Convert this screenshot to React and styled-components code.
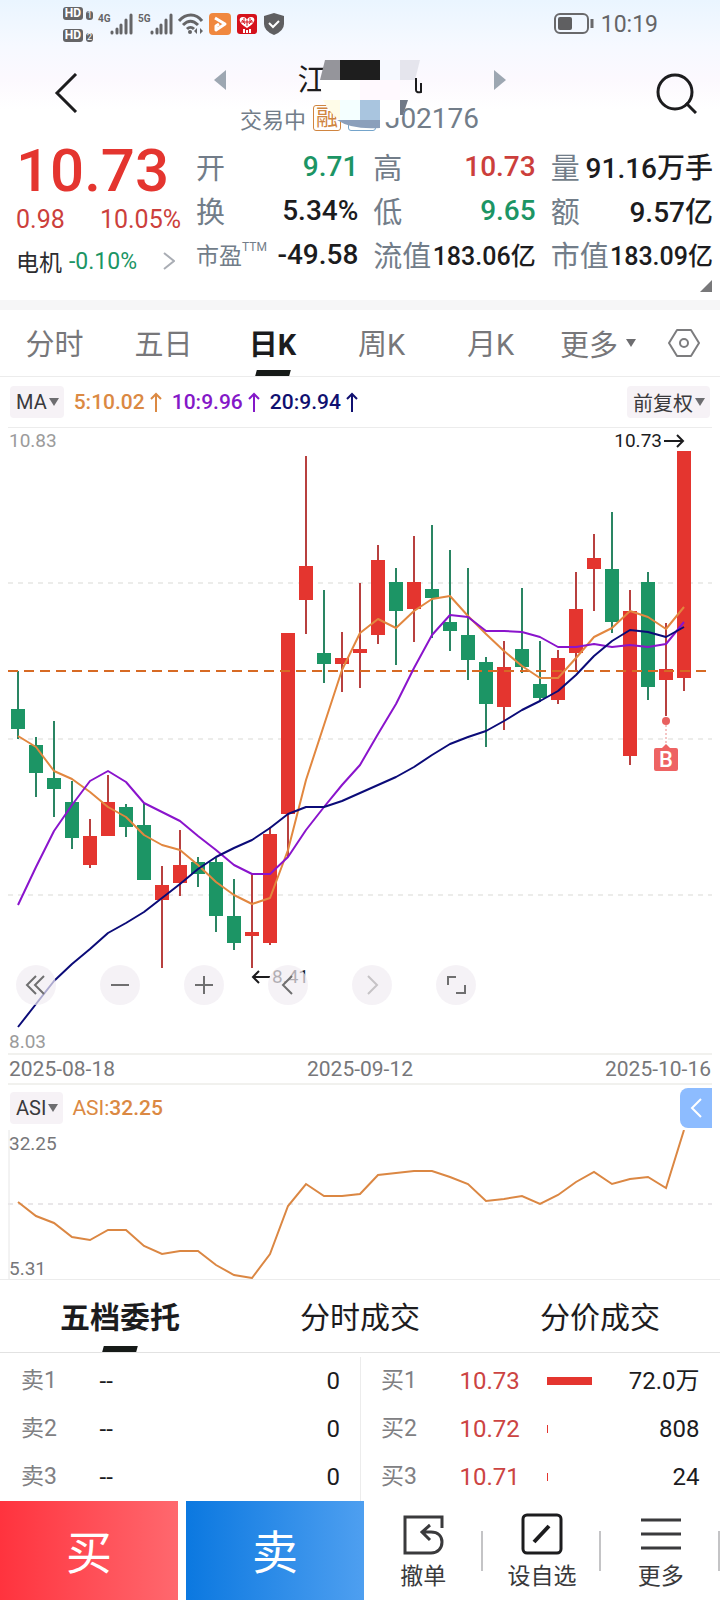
import React, { useState } from 'react';
import styled, { createGlobalStyle } from 'styled-components';

const RED = '#e4352f';
const GREEN = '#1c9565';
const INK = '#1c1c1e';
const SLATE = '#727d89';

// [high, body top, body bottom, low, direction]
const candles = [
  [671, 709, 729, 739, 'down'],
  [737, 745, 773, 797, 'down'],
  [721, 778, 789, 817, 'down'],
  [781, 802, 838, 849, 'down'],
  [819, 836, 865, 868, 'up'],
  [775, 802, 836, 836, 'up'],
  [804, 807, 827, 837, 'down'],
  [803, 825, 880, 880, 'down'],
  [866, 885, 900, 968, 'up'],
  [830, 865, 883, 896, 'up'],
  [857, 862, 874, 887, 'down'],
  [858, 862, 916, 932, 'down'],
  [879, 916, 943, 950, 'down'],
  [874, 932, 936, 968, 'up'],
  [827, 834, 943, 945, 'up'],
  [633, 633, 814, 857, 'up'],
  [456, 566, 600, 634, 'up'],
  [590, 653, 664, 683, 'down'],
  [632, 658, 664, 692, 'up'],
  [583, 649, 653, 688, 'up'],
  [545, 560, 635, 644, 'up'],
  [568, 582, 611, 665, 'down'],
  [536, 582, 609, 642, 'up'],
  [525, 589, 598, 638, 'down'],
  [550, 622, 631, 651, 'down'],
  [568, 635, 660, 680, 'down'],
  [657, 662, 704, 747, 'down'],
  [641, 667, 707, 730, 'up'],
  [588, 649, 667, 673, 'down'],
  [641, 684, 698, 702, 'down'],
  [650, 658, 700, 704, 'up'],
  [572, 609, 653, 672, 'up'],
  [534, 558, 569, 611, 'up'],
  [512, 569, 622, 633, 'down'],
  [590, 611, 756, 765, 'up'],
  [572, 582, 687, 700, 'down'],
  [623, 669, 680, 716, 'up'],
  [451, 451, 678, 691, 'up'],
];

const ma5 = [
  736, 747, 771, 779, 792, 807, 817, 835, 845, 850, 865, 882, 895, 904, 898, 850, 780, 725, 670,
  633, 619, 628, 611, 599, 596, 616, 634, 651, 666, 678, 678, 658, 637, 628, 611, 617, 629, 607,
];
const ma10 = [
  905, 867, 831, 805, 781, 771, 782, 803, 812, 821, 836, 850, 865, 874, 874, 857, 830, 807, 785,
  765, 734, 704, 668, 635, 615, 617, 631, 631, 632, 637, 647, 647, 644, 647, 645, 647, 644, 622,
];
const ma20 = [
  1027, 1004, 981, 964, 949, 933, 923, 912, 898, 884, 869, 857, 848, 840, 828, 814, 807, 807, 801,
  793, 785, 777, 767, 755, 744, 737, 731, 721, 710, 701, 691, 675, 656, 641, 630, 632, 637, 627,
];
const asi = [
  1202, 1216, 1223, 1237, 1240, 1230, 1230, 1246, 1254, 1251, 1251, 1265, 1275, 1278, 1254, 1206,
  1184, 1196, 1196, 1194, 1175, 1173, 1171, 1171, 1177, 1184, 1201, 1199, 1196, 1204, 1195, 1182,
  1172, 1184, 1179, 1177, 1188, 1130,
];

const xAt = (i) => 18 + i * 18;
const toPoints = (values) => values.map((y, i) => `${xAt(i)},${y}`).join(' ');

const stats = [
  [
    { label: '开', value: '9.71', color: GREEN },
    { label: '换', value: '5.34%' },
    { label: '市盈', sup: 'TTM', value: '-49.58', smallLabel: true },
  ],
  [
    { label: '高', value: '10.73', color: '#cc3f3c' },
    { label: '低', value: '9.65', color: GREEN },
    { label: '流值', value: '183.06亿', small: true },
  ],
  [
    { label: '量', value: '91.16万手' },
    { label: '额', value: '9.57亿' },
    { label: '市值', value: '183.09亿', small: true },
  ],
];

const periods = ['分时', '五日', '日K', '周K', '月K'];
const orderTabs = ['五档委托', '分时成交', '分价成交'];

const sells = [
  { name: '卖1', price: '--', qty: '0' },
  { name: '卖2', price: '--', qty: '0' },
  { name: '卖3', price: '--', qty: '0' },
];
const buys = [
  { name: '买1', price: '10.73', bar: 45, qty: '72.0万' },
  { name: '买2', price: '10.72', bar: 1, qty: '808' },
  { name: '买3', price: '10.71', bar: 1, qty: '24' },
];

function Signal({ label }) {
  return (
    <SignalBox>
      <small>{label}</small>
      <svg width="23" height="22" viewBox="0 0 23 22" stroke="#656567" strokeWidth="3" strokeLinecap="round">
        <path d="M2 20v-1M7 20v-4M11 20v-8M16 20V7M21 20V2" />
      </svg>
    </SignalBox>
  );
}

function StatusBar() {
  return (
    <Status>
      <HdStack>
        {[1, 2].map((n) => (
          <div key={n}>
            <b>HD</b>
            <i>{n}</i>
          </div>
        ))}
      </HdStack>
      <Signal label="4G" />
      <Signal label="5G" />
      <svg width="26" height="22" viewBox="0 0 26 22" fill="none" stroke="#656567" strokeWidth="3">
        <path d="M1 8C8 0 18 0 24 8M5 12C10 7 15 7 20 12M9 16c2-2 5-2 7 0" />
        <circle cx="12" cy="19" r="2" fill="#656567" stroke="none" />
        <path d="M16 18l3-3v6zM25 18l-3-3v6z" fill="#656567" stroke="none" />
      </svg>
      <svg width="22" height="22" viewBox="0 0 22 22">
        <rect width="22" height="22" rx="4" fill="#f0883f" />
        <path d="M6 5l10 6-9 6v-4l3-2" fill="none" stroke="#fff" strokeWidth="3" strokeLinejoin="round" />
      </svg>
      <svg width="22" height="20" viewBox="-1 0 22 20">
        <rect width="20" height="20" rx="3" fill="#d5121c" />
        <path d="M10 14C1 9 1 3 6 3q3 0 4 3 1-3 4-3c5 0 5 6-4 11z" fill="#fff" />
        <path d="M5 6l3 4M10 6v6M15 6l-3 4M4 8h12M7 4v4M13 4v4" stroke="#d5121c" strokeWidth="1" />
        <path d="M7 15v4M10 16v3M13 15v4" stroke="#fff" strokeWidth="2" />
      </svg>
      <svg width="22" height="22" viewBox="-1 0 22 22">
        <path d="M10 0l10 3v8q0 7-10 11Q0 18 0 11V3z" fill="#5f5f61" />
        <path d="M5 10l4 4 6-6" fill="none" stroke="#fff" strokeWidth="2" />
      </svg>
      <Clock>
        <svg width="42" height="22" viewBox="0 0 42 22" fill="none" stroke="#69696b" strokeWidth="2">
          <rect x="2" y="1" width="33" height="19" rx="5" />
          <rect x="5" y="4" width="14" height="13" rx="2" fill="#5f5f61" stroke="none" />
          <path d="M39 6v9" strokeWidth="3" />
        </svg>
        10:19
      </Clock>
    </Status>
  );
}

function Title() {
  return (
    <Nav>
      <IconButton aria-label="返回">
        <svg width="24" height="40" viewBox="0 0 24 40" fill="none" stroke={INK} strokeWidth="3">
          <path d="M22 1L3 20l19 19" />
        </svg>
      </IconButton>
      <Heading>
        <NameRow>
          <IconButton aria-label="上一只">
            <svg width="12" height="20" viewBox="0 0 12 20">
              <path d="M12 0v20L0 10z" fill="#9da7b2" />
            </svg>
          </IconButton>
          <h1>江</h1>
          <IconButton aria-label="下一只">
            <svg width="12" height="20" viewBox="0 0 12 20">
              <path d="M0 0v20l12-10z" fill="#9da7b2" />
            </svg>
          </IconButton>
        </NameRow>
        <CodeRow>
          <span>交易中</span>
          <Tag $color="#d08540">融</Tag>
          <Tag $color="#74a4cb" />
          <Code>J02176</Code>
        </CodeRow>
        <Mosaic width="108" height="72" viewBox="316 60 108 72" aria-hidden="true">
          <path d="M320 80h80v20h8l-6 17-12 2-10 1h-40l-18-20z" fill="#fff" />
          <path d="M325 60h15v20h-20z" fill="#95959b" />
          <path d="M340 60h40v20h-40z" fill="#1e1e1e" />
          <path d="M380 60h20v20h-20z" fill="#f6f9ff" />
          <path d="M400 60h20l-5 20h-15z" fill="#e5e5ed" />
          <path d="M360 80h40v20h-40z" fill="#fff9fe" />
          <path d="M323 100h17v20q-10-6-17-20z" fill="#fffce8" />
          <path d="M340 100h20v20h-20z" fill="#f4ffff" />
          <path d="M360 100h20v20h-20z" fill="#a9c5df" />
          <path d="M337 120h43v8q-28 2-43-8z" fill="#8b9fbb" />
          <path d="M400 100h8l-5 15h-3z" fill="#717986" />
          <path d="M416 78v12q0 3 5 2v-9" fill="none" stroke={INK} strokeWidth="2" />
        </Mosaic>
      </Heading>
      <IconButton aria-label="搜索">
        <svg width="42" height="42" viewBox="0 0 42 42" fill="none" stroke={INK} strokeWidth="3">
          <circle cx="20" cy="20" r="17" />
          <path d="M31 31l10 10" />
        </svg>
      </IconButton>
    </Nav>
  );
}

function Quote() {
  return (
    <QuoteGrid>
      <PriceColumn>
        <Price>10.73</Price>
        <Change>
          <span>0.98</span>
          <span>10.05%</span>
        </Change>
        <Sector href="#sector">
          电机 <em>-0.10%</em>
          <svg width="12" height="18" viewBox="0 0 12 18" fill="none" stroke="#a9adb4" strokeWidth="2">
            <path d="M1 1l10 8-10 8" />
          </svg>
        </Sector>
      </PriceColumn>
      {stats.map((column, i) => (
        <StatColumn key={i}>
          {column.map((s) => (
            <Stat key={s.label}>
              <StatLabel $small={s.smallLabel}>
                {s.label}
                {s.sup && <sup>{s.sup}</sup>}
              </StatLabel>
              <StatValue $color={s.color} $small={s.small}>
                {s.value}
              </StatValue>
            </Stat>
          ))}
        </StatColumn>
      ))}
    </QuoteGrid>
  );
}

function KLine() {
  return (
    <ChartBox>
      <svg viewBox="8 428 704 625" fontFamily="Roboto, sans-serif" fontSize="19">
        <g stroke="#ececea" strokeWidth="2" strokeDasharray="5 5">
          <path d="M8 583h704M8 739h704M8 895h704" />
        </g>
        {candles.map(([high, top, bottom, low, dir], i) => (
          <g key={i} fill={dir === 'up' ? RED : GREEN}>
            <rect x={xAt(i) - 1} y={high} width="2" height={low - high} fill={dir === 'up' ? '#b8403f' : '#2a8563'} />
            <rect x={xAt(i) - 7} y={top} width="14" height={bottom - top} />
          </g>
        ))}
        <path d="M8 671h698" stroke="#d76a24" strokeWidth="2" strokeDasharray="10 6" />
        <g fill="none" strokeWidth="2" strokeLinejoin="round">
          <polyline points={toPoints(ma5)} stroke="#e2873f" />
          <polyline points={toPoints(ma10)} stroke="#8a14cc" />
          <polyline points={toPoints(ma20)} stroke="#0b0b78" />
        </g>
        <path d="M666 725v22" stroke="#e98a88" strokeDasharray="2 2" />
        <circle cx="666" cy="721" r="4" fill="#e8605f" />
        <path d="M656 748h6l4-4 4 4h6q2 0 2 2v19q0 2-2 2h-20q-2 0-2-2v-19q0-2 2-2z" fill="#ee6363" />
        <text x="666" y="767" fill="#fff" fontSize="22" fontWeight="500" textAnchor="middle">
          B
        </text>
        <g fill="#9b9b9b">
          <text x="9" y="447">10.83</text>
          <text x="9" y="1048">8.03</text>
        </g>
        <g fill={INK}>
          <text x="662" y="447" textAnchor="end">
            10.73
          </text>
          <text x="272" y="983">8.41</text>
        </g>
        <g fill="none" stroke={INK} strokeWidth="2">
          <path d="M664 441h18M677 435l6 6-6 6" />
          <path d="M270 977h-17M259 971l-6 6 6 6" />
        </g>
      </svg>
      <Controls>
        <RoundButton aria-label="最早">
          <path d="M20 11l-9 9 9 9M28 11l-9 9 9 9" />
        </RoundButton>
        <RoundButton aria-label="缩小">
          <path d="M11 20h18" />
        </RoundButton>
        <RoundButton aria-label="放大">
          <path d="M11 20h18M20 11v18" />
        </RoundButton>
        <RoundButton aria-label="向左">
          <path d="M24 11l-9 9 9 9" />
        </RoundButton>
        <RoundButton aria-label="向右" faded>
          <path d="M16 11l9 9-9 9" />
        </RoundButton>
        <RoundButton aria-label="全屏">
          <path d="M12 20v-8h8M29 20v8h-9" />
        </RoundButton>
      </Controls>
    </ChartBox>
  );
}

function RoundButton({ children, faded, ...rest }) {
  return (
    <Round {...rest}>
      <svg width="40" height="40" viewBox="0 0 40 40" fill="none" stroke={faded ? '#c6c3c6' : '#6f6f70'} strokeWidth="2">
        {children}
      </svg>
    </Round>
  );
}

function OrderTable({ rows, side }) {
  return (
    <Orders $side={side}>
      <tbody>
        {rows.map((r) => (
          <tr key={r.name}>
            <th scope="row">{r.name}</th>
            <PriceCell $side={side}>{r.price}</PriceCell>
            {side === 'buy' && (
              <td>
                <Volume style={{ width: r.bar }} />
              </td>
            )}
            <QtyCell>{r.qty}</QtyCell>
          </tr>
        ))}
      </tbody>
    </Orders>
  );
}

export default function App() {
  const [period, setPeriod] = useState('日K');
  const [orderTab, setOrderTab] = useState('五档委托');

  return (
    <Page>
      <GlobalStyle />
      <Header>
        <StatusBar />
        <Title />
        <Quote />
        <Expand aria-label="展开">
          <svg width="12" height="12" viewBox="0 0 12 12">
            <path d="M12 0v12H0z" fill="#78787a" />
          </svg>
        </Expand>
      </Header>

      <PeriodTabs>
        {periods.map((p) => (
          <PeriodTab key={p} $active={p === period} onClick={() => setPeriod(p)}>
            {p}
          </PeriodTab>
        ))}
        <MoreTab>
          更多
          <Caret />
        </MoreTab>
        <IconButton aria-label="设置">
          <svg width="32" height="30" viewBox="0 0 32 30" fill="none" stroke="#7c7c7e" strokeWidth="2">
            <path d="M9 2h14l8 13-8 13H9L1 15z" strokeLinejoin="round" />
            <circle cx="16" cy="15" r="4" />
          </svg>
        </IconButton>
      </PeriodTabs>

      <Legend>
        <Chip>
          MA
          <Caret />
        </Chip>
        {[
          ['5:10.02', '#db8943'],
          ['10:9.96', '#8418c8'],
          ['20:9.94', '#101070'],
        ].map(([text, color]) => (
          <LegendItem key={text} $color={color}>
            {text}
            <svg width="12" height="20" viewBox="0 0 12 20" fill="none" stroke="currentColor" strokeWidth="2">
              <path d="M6 20V2M1 7l5-5 5 5" />
            </svg>
          </LegendItem>
        ))}
        <Chip $right>
          前复权
          <Caret />
        </Chip>
      </Legend>

      <KLine />
      <Dates>
        <span>2025-08-18</span>
        <span>2025-09-12</span>
        <span>2025-10-16</span>
      </Dates>

      <AsiBar>
        <Chip>
          ASI
          <Caret />
        </Chip>
        <AsiValue>
          ASI:<b>32.25</b>
        </AsiValue>
        <Drawer aria-label="更多指标">
          <svg width="12" height="20" viewBox="0 0 12 20" fill="none" stroke="#fff" strokeWidth="2">
            <path d="M11 1l-9 9 9 9" />
          </svg>
        </Drawer>
      </AsiBar>
      <ChartBox>
        <svg viewBox="8 1130 704 149" fontFamily="Roboto, sans-serif" fontSize="19" fill="#77777a">
          <path d="M9 1130v149" stroke="#e6e6e6" strokeWidth="1" />
          <path d="M8 1204h704" stroke="#e9e7e9" strokeWidth="2" strokeDasharray="5 5" />
          <polyline points={toPoints(asi)} fill="none" stroke="#db8743" strokeWidth="2" />
          <text x="9" y="1150">
            32.25
          </text>
          <text x="9" y="1275">
            5.31
          </text>
        </svg>
      </ChartBox>

      <OrderTabs>
        {orderTabs.map((t) => (
          <OrderTab key={t} $active={t === orderTab} onClick={() => setOrderTab(t)}>
            {t}
          </OrderTab>
        ))}
      </OrderTabs>
      <OrderBook>
        <OrderTable rows={sells} side="sell" />
        <OrderTable rows={buys} side="buy" />
      </OrderBook>

      <Footer>
        <Trade $from="#ff333e" $to="#ff686e">
          买
        </Trade>
        <Trade $from="#0b78e0" $to="#4e9ff0">
          卖
        </Trade>
        <Actions>
          <Action>
            <svg width="42" height="42" viewBox="0 0 42 42" fill="none" stroke="#3a3a3c" strokeWidth="3">
              <path d="M40 15V4H3v36h26c7 0 11-5 11-11s-4-10-11-10h-8M28 12l-8 7 8 8" />
            </svg>
            撤单
          </Action>
          <Action>
            <svg width="42" height="42" viewBox="0 0 42 42" fill="none" stroke={INK} strokeWidth="3">
              <rect x="2" y="2" width="38" height="38" rx="4" />
              <path d="M13 29l15-16" strokeWidth="4" />
            </svg>
            设自选
          </Action>
          <Action>
            <svg width="42" height="42" viewBox="0 0 42 42" stroke="#3a3a3c" strokeWidth="3">
              <path d="M1 7h40M1 21h40M1 35h40" />
            </svg>
            更多
          </Action>
        </Actions>
      </Footer>
    </Page>
  );
}

const GlobalStyle = createGlobalStyle`
  * {
    box-sizing: border-box;
  }

  body {
    margin: 0;
    background: #fff;
    color: ${INK};
    font-family: Roboto, 'Noto Sans CJK SC', sans-serif;
  }

  button {
    padding: 0;
    border: 0;
    background: none;
    color: inherit;
    font: inherit;
    cursor: pointer;
  }

  svg {
    display: block;
    flex: none;
  }
`;

const Page = styled.main`
  display: flex;
  flex-direction: column;
`;

const Header = styled.header`
  border-bottom: 10px solid #f6f6f7;
  background: linear-gradient(#eaf5ff 0, #f6f9ff 45px, #fcf9fe 80px, #fff 110px);
`;

const Status = styled.div`
  display: flex;
  align-items: center;
  gap: 5px;
  height: 50px;
  padding: 0 62px 2px 63px;
`;

const HdStack = styled.div`
  display: flex;
  flex-direction: column;
  gap: 9px;

  div {
    display: flex;
    align-items: flex-end;
    gap: 3px;
  }

  b,
  i {
    border-radius: 3px;
    background: #656567;
    color: #fff;
    font-size: 12px;
    font-style: normal;
    line-height: 13px;
    text-align: center;
  }

  b {
    width: 20px;
  }

  i {
    width: 7px;
    font-size: 9px;
    line-height: 9px;
  }
`;

const SignalBox = styled.div`
  display: flex;
  align-items: flex-start;

  small {
    width: 12px;
    font-size: 10px;
    font-weight: 700;
    line-height: 12px;
    color: #656567;
  }
`;

const Clock = styled.div`
  display: flex;
  align-items: center;
  gap: 6px;
  margin-left: auto;
  color: #656567;
  font-size: 23px;
`;

const IconButton = styled.button`
  display: flex;
  align-items: center;
  justify-content: center;
`;

const Nav = styled.div`
  display: flex;
  align-items: flex-start;
  justify-content: space-between;
  height: 86px;
  padding: 0 23px 0 54px;

  > ${IconButton} {
    height: 86px;
  }
`;

const Heading = styled.div`
  position: relative;
  display: flex;
  flex-direction: column;
  align-items: center;
  width: 292px;
  padding-top: 10px;
  margin-right: 14px;
`;

const NameRow = styled.div`
  display: flex;
  align-items: center;
  justify-content: space-between;
  width: 100%;
  height: 40px;

  h1 {
    width: 124px;
    margin: 0;
    font-size: 30px;
    font-weight: 400;
    line-height: 40px;
  }
`;

const CodeRow = styled.div`
  display: flex;
  align-items: center;
  gap: 7px;
  height: 36px;
  color: ${SLATE};
  font-size: 22px;
`;

const Tag = styled.span`
  width: 28px;
  height: 26px;
  border: 1px solid ${(p) => p.$color};
  border-radius: 3px;
  color: ${(p) => p.$color};
  font-size: 22px;
  line-height: 24px;
  text-align: center;
`;

const Code = styled.span`
  padding-left: 2px;
  font-size: 28px;
`;

const Mosaic = styled.svg`
  position: absolute;
  top: 10px;
  left: 102px;
`;

const QuoteGrid = styled.section`
  display: grid;
  grid-template-columns: 165px repeat(3, 1fr);
  column-gap: 15px;
  padding: 8px 7px 0 16px;
`;

const PriceColumn = styled.div`
  display: flex;
  flex-direction: column;
`;

const Price = styled.div`
  color: ${RED};
  font-size: 60px;
  font-weight: 500;
  line-height: 54px;
`;

const Change = styled.div`
  display: flex;
  justify-content: space-between;
  color: #cc3f3c;
  font-size: 25px;
  line-height: 44px;
`;

const Sector = styled.a`
  display: flex;
  align-items: center;
  gap: 7px;
  height: 38px;
  color: #2d2d30;
  font-size: 23px;
  text-decoration: none;

  em {
    color: ${GREEN};
    font-style: normal;
  }

  svg {
    margin: 0 6px 0 auto;
  }
`;

const StatColumn = styled.dl`
  margin: 0;
`;

const Stat = styled.div`
  display: flex;
  align-items: center;
  justify-content: space-between;
  height: 44px;
`;

const StatLabel = styled.dt`
  display: flex;
  color: ${SLATE};
  font-size: ${(p) => (p.$small ? 23 : 29)}px;
  white-space: nowrap;

  sup {
    font-size: 12px;
    line-height: 20px;
  }
`;

const StatValue = styled.dd`
  margin: 0;
  color: ${(p) => p.$color || INK};
  font-size: ${(p) => (p.$small ? 25 : 28)}px;
  font-weight: 500;
  white-space: nowrap;
`;

const Expand = styled.button`
  display: flex;
  margin: 0 8px 8px auto;
`;

const Caret = styled.span`
  border: 5px solid transparent;
  border-top: 8px solid #6d6d70;
  border-bottom: 0;
`;

const PeriodTabs = styled.nav`
  display: grid;
  grid-template-columns: repeat(5, 109fr) 103fr 72fr;
  height: 67px;
  border-bottom: 1px solid #ececec;
`;

const PeriodTab = styled.button`
  display: flex;
  flex-direction: column;
  align-items: center;
  color: ${(p) => (p.$active ? INK : '#77777a')};
  font-size: 29px;
  font-weight: ${(p) => (p.$active ? 700 : 400)};
  line-height: 60px;
  padding-top: 5px;

  &::after {
    content: '';
    width: 34px;
    height: 6px;
    margin-top: -5px;
    background: ${(p) => (p.$active ? '#161a18' : 'transparent')};
    transform: skewX(-15deg);
  }
`;

const MoreTab = styled.button`
  display: flex;
  align-items: center;
  gap: 8px;
  padding-left: 15px;
  color: #77777a;
  font-size: 29px;
`;

const Legend = styled.div`
  display: flex;
  align-items: center;
  gap: 10px;
  height: 51px;
  margin: 0 8px;
  padding: 0 2px;
  border-bottom: 1px solid #ececec;
`;

const Chip = styled.button`
  display: flex;
  align-items: center;
  gap: 2px;
  height: 32px;
  padding: 0 5px 0 6px;
  border-radius: 4px;
  background: #f6f2f6;
  color: #3a3a3d;
  font-size: 20px;
  margin-left: ${(p) => (p.$right ? 'auto' : 0)};
`;

const LegendItem = styled.span`
  display: flex;
  align-items: center;
  gap: 5px;
  color: ${(p) => p.$color};
  font-size: 21px;
  font-weight: 500;
`;

const ChartBox = styled.section`
  position: relative;
  margin: 0 8px;

  > svg {
    width: 100%;
    height: auto;
  }
`;

const Controls = styled.div`
  position: absolute;
  left: 8px;
  bottom: 48px;
  display: flex;
  gap: 44px;
`;

const Round = styled.button`
  border-radius: 50%;
  background: rgba(241, 236, 242, 0.7);
`;

const Dates = styled.div`
  display: flex;
  justify-content: space-between;
  margin: 0 8px;
  padding: 0 1px;
  border: 2px solid #f1f1ee;
  border-width: 2px 0;
  color: #77777a;
  font-size: 21px;
  line-height: 28px;
`;

const AsiBar = styled.div`
  display: flex;
  align-items: center;
  gap: 9px;
  height: 45px;
  margin: 0 8px;
  padding-left: 2px;
`;

const AsiValue = styled.span`
  color: #db8943;
  font-size: 21px;

  b {
    font-weight: 500;
  }
`;

const Drawer = styled.button`
  display: flex;
  align-items: center;
  justify-content: center;
  width: 32px;
  height: 40px;
  margin-left: auto;
  border-radius: 8px 0 0 8px;
  background: #8dbcff;
`;

const OrderTabs = styled.nav`
  display: grid;
  grid-template-columns: repeat(3, 1fr);
  height: 74px;
  border-top: 1px solid #ececec;
  border-bottom: 1px solid #e2e2e2;
`;

const OrderTab = styled(PeriodTab)`
  color: ${INK};
  font-size: 30px;
  line-height: 66px;
`;

const OrderBook = styled.section`
  display: grid;
  grid-template-columns: 1fr 1fr;
  padding-top: 4px;
`;

const Orders = styled.table`
  width: 100%;
  border-collapse: collapse;
  border-left: 1px solid ${(p) => (p.$side === 'buy' ? '#ececec' : 'transparent')};
  font-size: 24px;

  tr {
    height: 48px;
  }

  th {
    width: 99px;
    padding: 0 0 0 20px;
    color: #808083;
    font-size: 23px;
    font-weight: 400;
    line-height: 44px;
    text-align: left;
  }

  td {
    padding: 0;
    line-height: 44px;
  }
`;

const PriceCell = styled.td`
  width: 87px;
  color: ${(p) => (p.$side === 'buy' ? '#cc4442' : INK)};
`;

const QtyCell = styled.td`
  && {
    padding-right: 20px;
  }
  text-align: right;
`;

const Volume = styled.div`
  height: 8px;
  background: ${RED};
`;

const Footer = styled.footer`
  display: grid;
  grid-template-columns: 178fr 8px 178fr 356fr;
  height: 99px;

  > :nth-child(2) {
    grid-column: 3;
  }
`;

const Trade = styled.button`
  background: linear-gradient(90deg, ${(p) => p.$from}, ${(p) => p.$to});

  && {
    padding-bottom: 4px;
    color: #fff;
    font-size: 46px;
  }
`;

const Actions = styled.div`
  display: grid;
  grid-template-columns: repeat(3, 1fr);
`;

const Action = styled.button`
  display: flex;
  flex-direction: column;
  align-items: center;
  gap: 2px;
  padding-top: 12px;
  background: linear-gradient(#c4c4c6, #c4c4c6) right 30px / 2px 40px no-repeat;
  color: #3a3a3c;
  font-size: 23px;
`;
